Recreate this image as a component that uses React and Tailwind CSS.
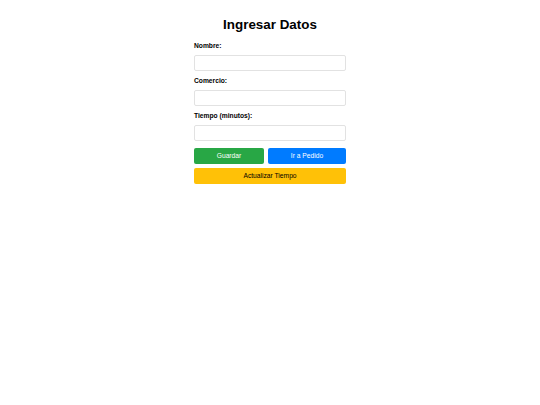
export default function App() {
  const font = { fontFamily: '"Liberation Sans", Arial, sans-serif' };
  return (
    <div className="w-[540px] h-[405px] bg-white" style={font}>
      <div className="w-[152px] mx-auto pt-[16px]">
        <h2 className="text-[13.4px] leading-[18px] font-bold text-center text-black mb-[8px]">Ingresar Datos</h2>
        <label className="block text-[6.7px] leading-[8px] font-bold text-black mb-[5px]">Nombre:</label>
        <input className="block w-full h-[16px] border border-[#e2e2e2] rounded-[2px] bg-white mb-[6px]" />
        <label className="block text-[6.7px] leading-[8px] font-bold text-black mb-[5px]">Comercio:</label>
        <input className="block w-full h-[16px] border border-[#e2e2e2] rounded-[2px] bg-white mb-[6px]" />
        <label className="block text-[6.7px] leading-[8px] font-bold text-black mb-[5px]">Tiempo (minutos):</label>
        <input className="block w-full h-[16px] border border-[#e2e2e2] rounded-[2px] bg-white mb-[7px]" />
        <div className="flex gap-[4px] mb-[4px]">
          <button className="w-[70px] h-[16px] bg-[#28a745] text-white text-[6.7px] rounded-[2px]">Guardar</button>
          <button className="flex-1 h-[16px] bg-[#007bff] text-white text-[6.7px] rounded-[2px]">Ir a Pedido</button>
        </div>
        <button className="block w-full h-[16px] bg-[#ffc107] text-black text-[6.7px] rounded-[2px]">Actualizar Tiempo</button>
      </div>
    </div>
  );
}
